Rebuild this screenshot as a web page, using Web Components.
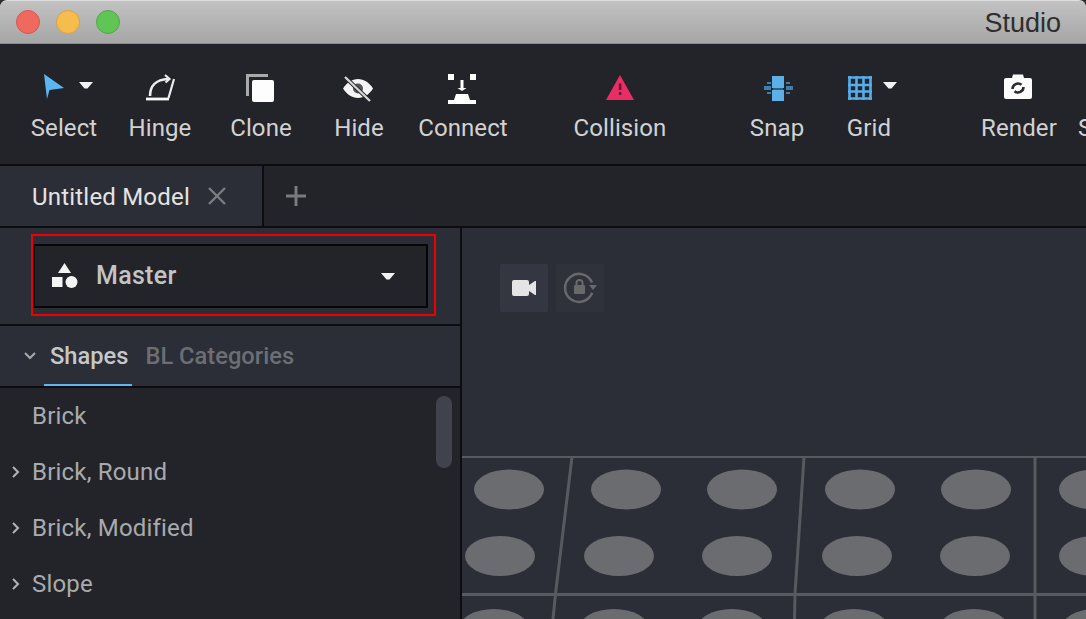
<!DOCTYPE html>
<html>
<head>
<meta charset="utf-8">
<title>Studio</title>
<style>
    html, body { margin: 0; height: 619px; overflow: hidden; background: #2c2c2e; }
    body { font-family: Roboto, "Liberation Sans", sans-serif; }
</style>
</head>
<body>
<studio-app></studio-app>

<script>
'use strict';

const CARET = (x, y) => `<path d="M${x} ${y}h14l-5.500 6.500h-3z" fill="#f2f2f2"/>`;

const toolIcons = {
    select: `<path d="M44 74L64 88 49.500 90 47 99z" fill="#5cb6f2"/>${CARET(79, 82)}`,
    hinge: `<path d="M146 99h23" stroke="#f8f8f8" stroke-width="2.800" fill="none"/>
            <path d="M150 96c0-10 6-16.500 18-17" stroke="#ececec" stroke-width="2.600" fill="none"/>
            <path d="M165 75l4.500 4-4 3.500M174 79l-5.500 19" stroke="#ececec" stroke-width="2.200" fill="none"/>`,
    clone: `<path d="M247.500 96V75.500H268" stroke="#a9a9a9" stroke-width="3" fill="none"/>
            <rect x="252" y="80" width="22" height="22" rx="2" fill="#fdfdfd"/>`,
    hide: `<path d="M343 88.500c4-6 9-9.500 15-9.500s11 3.500 15 9.500c-4 6-9 9.500-15 9.500s-11-3.500-15-9.500z" fill="#f4f4f4"/>
           <circle cx="358" cy="88.500" r="5" fill="#55565a"/>
           <path d="M345 77l25 24" stroke="#23242a" stroke-width="4"/>
           <path d="M345 77l25 24" stroke="#d6d6d6" stroke-width="2.300"/>`,
    connect: `<path d="M448 74h6v6h-6zM470 74h6v6h-6zM460.500 80h3v8h3l-4.500 3-4.500-3h3zM456 94h12l2 6h6v4h-28v-4h6z" fill="#fff"/>`,
    collision: `<path d="M620 75l14 25h-28z" fill="#ec2c65"/><path d="M618.800 83.500h2.600v6.500h-2.600zM618.800 92h2.600v3h-2.600z" fill="#5d1f38"/>`,
    snap: `<path d="M772 76h12v12h-12zM772 90h12v11h-12z" fill="#5cb0e6"/>
           <path d="M773 88h10v2h-10z" fill="#2f5f80"/>
           <path d="M767 82h4v2h-4zM764 86h7v4h-7zM767 92h4v2h-4zM786 82h4v2h-4zM786 86h7v4h-7zM786 92h4v2h-4z" fill="#3c7fac"/>`,
    grid: `<path d="M849.500 76v24M856.500 76v24M863.500 76v24M870.500 76v24M848 77.500h24M848 85h24M848 91.500h24M848 98.500h24" stroke="#55ade9" stroke-width="2.600" fill="none"/>${CARET(883, 82)}`,
    render: `<path d="M1006 78h6l1-3.500h10l1 3.500h6a2 2 0 0 1 2 2v17a2 2 0 0 1-2 2h-24a2 2 0 0 1-2-2v-17a2 2 0 0 1 2-2z" fill="#fbfbfb"/>
             <path d="M1012.500 89a5.500 5.500 0 0 1 9-4.200M1023.500 87a5.500 5.500 0 0 1-9 4.200" stroke="#2b2c31" stroke-width="2.600" fill="none"/>`
};

const titleTemplate = document.createElement('template');
titleTemplate.innerHTML = `
    <style>
        :host {
            display: flex;
            align-items: center;
            height: 44px;
            padding: 0 25px 0 16px;
            box-sizing: border-box;
            border-radius: 7px 7px 0 0;
            border-top: 1px solid #dedede;
            border-bottom: 1px solid #8b8b8b;
            background: linear-gradient(#c2c2c2, #a6a6a6);
        }
        .light {
            width: 22px;
            height: 22px;
            border-radius: 50%;
            border: 1px solid;
            margin-right: 16px;
        }
        .red { background: #f0695f; border-color: #d9564d; }
        .yellow { background: #f6bd4e; border-color: #dda13d; }
        .green { background: #60c554; border-color: #4fa946; }
        .title {
            margin-left: auto;
            padding-top: 3px;
            font: 27px "Liberation Sans", sans-serif;
            color: #2e2e2e;
        }
    </style>
    <span class="light red"></span>
    <span class="light yellow"></span>
    <span class="light green"></span>
    <span class="title"><slot></slot></span>
`;

class StudioTitlebar extends HTMLElement {
    constructor() {
        super();
        this.attachShadow({ mode: 'open' });
        this.shadowRoot.appendChild(titleTemplate.content.cloneNode(true));
    }
}

const toolTemplate = document.createElement('template');
toolTemplate.innerHTML = `
    <style>
        :host {
            display: flex;
            flex-direction: column;
            flex: none;
            align-items: center;
        }
        svg {
            display: block;
            height: 32px;
            overflow: visible;
        }
        span {
            margin-top: 10px;
            line-height: 28px;
            font-size: 24px;
            letter-spacing: .1px;
            color: #d2d2d2;
            white-space: nowrap;
        }
    </style>
    <svg></svg>
    <span><slot></slot></span>
`;

class ToolItem extends HTMLElement {
    constructor() {
        super();
        this.attachShadow({ mode: 'open' });
        this.shadowRoot.appendChild(toolTemplate.content.cloneNode(true));
    }

    connectedCallback() {
        // x and w are the item's column on the toolbar, the icons are drawn in page coordinates
        const x = Number(this.getAttribute('x'));
        const w = Number(this.getAttribute('w'));
        this.style.width = w + 'px';
        const svg = this.shadowRoot.querySelector('svg');
        svg.setAttribute('viewBox', `${x} 72 ${w} 32`);
        svg.setAttribute('width', w);
        svg.innerHTML = toolIcons[this.getAttribute('icon')] || '';
    }
}

const toolbarTemplate = document.createElement('template');
toolbarTemplate.innerHTML = `
    <style>
        :host {
            display: flex;
            height: 122px;
            padding: 28px 0 0 16px;
            box-sizing: border-box;
            background: #23242a;
            border-bottom: 2px solid #0d0d0f;
            overflow: hidden;
        }
    </style>
    <slot></slot>
`;

class StudioToolbar extends HTMLElement {
    constructor() {
        super();
        this.attachShadow({ mode: 'open' });
        this.shadowRoot.appendChild(toolbarTemplate.content.cloneNode(true));
    }
}

const tabsTemplate = document.createElement('template');
tabsTemplate.innerHTML = `
    <style>
        :host {
            display: flex;
            height: 62px;
            box-sizing: border-box;
            background: #23242a;
            border-bottom: 2px solid #0d0d0f;
        }
        .tab {
            display: flex;
            align-items: center;
            width: 264px;
            padding: 2px 0 0 32px;
            box-sizing: border-box;
            background: #2b2e37;
            border-right: 2px solid #0d0d0f;
            font-size: 24px;
            letter-spacing: .2px;
            color: #e4e4e4;
        }
        .close { margin: -2px 0 0 17px; }
        .add { margin: 20px 0 0 22px; }
    </style>
    <div class="tab">
        <slot></slot>
        <svg class="close" width="20" height="20" viewBox="0 0 20 20"><path d="M2 2l16 16M18 2L2 18" stroke="#7c7d80" stroke-width="2.400"/></svg>
    </div>
    <svg class="add" width="20" height="20" viewBox="0 0 20 20"><path d="M10 0v20M0 10h20" stroke="#797a7e" stroke-width="3"/></svg>
`;

class TabStrip extends HTMLElement {
    constructor() {
        super();
        this.attachShadow({ mode: 'open' });
        this.shadowRoot.appendChild(tabsTemplate.content.cloneNode(true));
    }
}

const pickerTemplate = document.createElement('template');
pickerTemplate.innerHTML = `
    <style>
        :host {
            display: block;
            height: 98px;
            padding: 6px 24px 0 31px;
            box-sizing: border-box;
            background: #2b2e37;
            border-bottom: 2px solid #0d0d0f;
        }
        .highlight {
            height: 82px;
            padding: 8px 6px 0 0;
            box-sizing: border-box;
            border: 2px solid #f00000;
        }
        .select {
            display: flex;
            align-items: center;
            height: 64px;
            padding-bottom: 1px;
            box-sizing: border-box;
            background: #23242a;
            border: 2px solid #060607;
            font-size: 25px;
            font-weight: 500;
            letter-spacing: .3px;
            color: #c4c4c4;
        }
        .shapes { margin: 0 18px 0 17px; }
        .caret { margin: 1px 31px 0 auto; }
    </style>
    <div class="highlight">
        <div class="select">
            <svg class="shapes" width="26" height="26" viewBox="0 0 26 26">
                <path d="M8.500 0l6.500 10H2z" fill="#f4f4f4" transform="translate(4 0)"/>
                <rect x="0" y="14" width="10.500" height="10" fill="#f4f4f4"/>
                <circle cx="19.500" cy="19" r="6" fill="#f4f4f4"/>
            </svg>
            <slot></slot>
            <svg class="caret" width="14" height="7" viewBox="0 0 14 7"><path d="M0 0h14l-5.500 6.500h-3z" fill="#f2f2f2"/></svg>
        </div>
    </div>
`;

class SetPicker extends HTMLElement {
    constructor() {
        super();
        this.attachShadow({ mode: 'open' });
        this.shadowRoot.appendChild(pickerTemplate.content.cloneNode(true));
    }
}

const catTabsTemplate = document.createElement('template');
catTabsTemplate.innerHTML = `
    <style>
        :host {
            display: flex;
            align-items: center;
            height: 62px;
            box-sizing: border-box;
            padding-left: 24px;
            background: #2b2e37;
            border-bottom: 2px solid #0d0d0f;
            font-size: 23.700px;
            font-weight: 500;
        }
        .active {
            position: relative;
            align-self: stretch;
            display: flex;
            align-items: center;
            margin-left: 14px;
            margin-right: 17px;
            color: #c6c7c9;
        }
        /* underline sits over the border of the row */
        .active::after {
            content: '';
            position: absolute;
            left: -6px;
            right: -4px;
            bottom: 0;
            height: 2px;
            background: #5cb6f2;
        }
        .other { color: #6c6e73; }
    </style>
    <svg width="12" height="8" viewBox="0 0 12 8"><path d="M1 1l5 5 5-5" stroke="#a9a9ab" stroke-width="2" fill="none"/></svg>
    <span class="active"><slot name="active"></slot></span>
    <span class="other"><slot name="other"></slot></span>
`;

class CategoryTabs extends HTMLElement {
    constructor() {
        super();
        this.attachShadow({ mode: 'open' });
        this.shadowRoot.appendChild(catTabsTemplate.content.cloneNode(true));
    }
}

const rowTemplate = document.createElement('template');
rowTemplate.innerHTML = `
    <style>
        :host {
            display: flex;
            align-items: center;
            height: 56px;
            padding-left: 12px;
            font-size: 24px;
            letter-spacing: .2px;
            color: #a9aaad;
        }
        svg { flex: none; margin-right: 12px; }
        :host([leaf]) svg { visibility: hidden; }
    </style>
    <svg width="8" height="14" viewBox="0 0 8 14"><path d="M1 2l5 5-5 5" stroke="#b4b4b6" stroke-width="2" fill="none"/></svg>
    <slot></slot>
`;

class TreeRow extends HTMLElement {
    constructor() {
        super();
        this.attachShadow({ mode: 'open' });
        this.shadowRoot.appendChild(rowTemplate.content.cloneNode(true));
    }
}

const listTemplate = document.createElement('template');
listTemplate.innerHTML = `
    <style>
        :host {
            display: block;
            position: relative;
            flex: 1;
            min-height: 0;
            overflow: hidden;
            background: #23242a;
        }
        .thumb {
            position: absolute;
            top: 8px;
            right: 8px;
            width: 16px;
            height: 72px;
            border-radius: 8px;
            background: #41434c;
        }
    </style>
    <slot></slot>
    <div class="thumb"></div>
`;

class TreeList extends HTMLElement {
    constructor() {
        super();
        this.attachShadow({ mode: 'open' });
        this.shadowRoot.appendChild(listTemplate.content.cloneNode(true));
    }
}

const panelTemplate = document.createElement('template');
panelTemplate.innerHTML = `
    <style>
        :host {
            display: flex;
            flex-direction: column;
            flex: none;
            width: 462px;
            box-sizing: border-box;
            border-right: 2px solid #0d0d0f;
        }
    </style>
    <slot></slot>
`;

class SidePanel extends HTMLElement {
    constructor() {
        super();
        this.attachShadow({ mode: 'open' });
        this.shadowRoot.appendChild(panelTemplate.content.cloneNode(true));
    }
}

const studs = [
    [[509, 489.500], [626, 489.500], [742, 489.500], [860, 489.500], [976, 489.500], [1094, 489.500]],
    [[500, 556], [619, 556], [737, 556], [857, 556], [975, 556], [1094, 556]],
    [[494, 629], [614, 629], [732, 629], [854, 629], [974, 629], [1096, 629]]
].flat().map(([cx, cy]) => `<ellipse cx="${cx}" cy="${cy}" rx="35" ry="20" fill="#6a6c70"/>`).join('');

const viewTemplate = document.createElement('template');
viewTemplate.innerHTML = `
    <style>
        :host {
            display: flex;
            flex-direction: column;
            flex: 1;
            min-width: 0;
            overflow: hidden;
            background: #2b2e37;
        }
        .buttons {
            display: flex;
            gap: 8px;
            padding: 36px 0 0 38px;
        }
        .btn {
            display: flex;
            width: 48px;
            height: 48px;
            align-items: center;
            justify-content: center;
            background: #2f323b;
            border-radius: 2px;
        }
        .btn.on { background: #343741; }
        .plate {
            display: block;
            flex: none;
            margin-top: auto;
        }
    </style>
    <div class="buttons">
        <div class="btn on">
            <svg width="26" height="20" viewBox="0 0 26 20">
                <path d="M2 2h13a2 2 0 0 1 2 2v3l6-4h1v14h-1l-6-4v3a2 2 0 0 1-2 2H2a2 2 0 0 1-2-2V4a2 2 0 0 1 2-2z" fill="#e4e4e4" transform="translate(1 0)"/>
            </svg>
        </div>
        <div class="btn">
            <svg width="36" height="36" viewBox="0 0 36 36" fill="none">
                <path d="M30.200 22.800A14 14 0 1 1 30 12.500" stroke="#69696c" stroke-width="2.500"/>
                <path d="M27 15h8l-4 5z" fill="#69696c"/>
                <rect x="12" y="15" width="11" height="9" rx="1" fill="#69696c"/>
                <path d="M14.500 15v-2a3 3 0 0 1 6 0v2" stroke="#69696c" stroke-width="2"/>
            </svg>
        </div>
    </div>
    <svg class="plate" width="624" height="191" viewBox="462 428 624 191">
        <g fill="none" stroke="#585a60">
            <path d="M462 457h624" stroke-width="2"/>
            <path d="M462 594.500h624" stroke-width="3"/>
            <path d="M572 457l-16.500 137-2.500 25" stroke-width="3"/>
            <path d="M804 457l-9 137-.5 25" stroke-width="3"/>
            <path d="M1035 457v162" stroke-width="3"/>
        </g>
        ${studs}
    </svg>
`;

class ViewPort extends HTMLElement {
    constructor() {
        super();
        this.attachShadow({ mode: 'open' });
        this.shadowRoot.appendChild(viewTemplate.content.cloneNode(true));
    }
}

const appTemplate = document.createElement('template');
appTemplate.innerHTML = `
    <style>
        :host {
            display: flex;
            flex-direction: column;
            width: 1086px;
            height: 619px;
            overflow: hidden;
        }
        .work {
            display: flex;
            flex: 1;
            min-height: 0;
        }
    </style>
    <studio-titlebar>Studio</studio-titlebar>
    <studio-toolbar>
        <tool-item icon="select" x="16" w="96">Select</tool-item>
        <tool-item icon="hinge" x="112" w="96">Hinge</tool-item>
        <tool-item icon="clone" x="208" w="106">Clone</tool-item>
        <tool-item icon="hide" x="314" w="90">Hide</tool-item>
        <tool-item icon="connect" x="404" w="118">Connect</tool-item>
        <tool-item icon="collision" x="522" w="196">Collision</tool-item>
        <tool-item icon="snap" x="718" w="118">Snap</tool-item>
        <tool-item icon="grid" x="836" w="66">Grid</tool-item>
        <tool-item icon="render" x="971" w="96" style="margin-left: 69px">Render</tool-item>
        <tool-item icon="" x="1078" w="30" style="margin-left: 11px; align-items: flex-start">S</tool-item>
    </studio-toolbar>
    <tab-strip>Untitled Model</tab-strip>
    <div class="work">
        <side-panel>
            <set-picker>Master</set-picker>
            <category-tabs>
                <span slot="active">Shapes</span>
                <span slot="other">BL Categories</span>
            </category-tabs>
            <tree-list>
                <tree-row leaf>Brick</tree-row>
                <tree-row>Brick, Round</tree-row>
                <tree-row>Brick, Modified</tree-row>
                <tree-row>Slope</tree-row>
            </tree-list>
        </side-panel>
        <view-port></view-port>
    </div>
`;

class StudioApp extends HTMLElement {
    constructor() {
        super();
        this.attachShadow({ mode: 'open' });
        this.shadowRoot.appendChild(appTemplate.content.cloneNode(true));
    }
}

customElements.define('studio-titlebar', StudioTitlebar);
customElements.define('tool-item', ToolItem);
customElements.define('studio-toolbar', StudioToolbar);
customElements.define('tab-strip', TabStrip);
customElements.define('set-picker', SetPicker);
customElements.define('category-tabs', CategoryTabs);
customElements.define('tree-row', TreeRow);
customElements.define('tree-list', TreeList);
customElements.define('side-panel', SidePanel);
customElements.define('view-port', ViewPort);
customElements.define('studio-app', StudioApp);
</script>
</body>
</html>
